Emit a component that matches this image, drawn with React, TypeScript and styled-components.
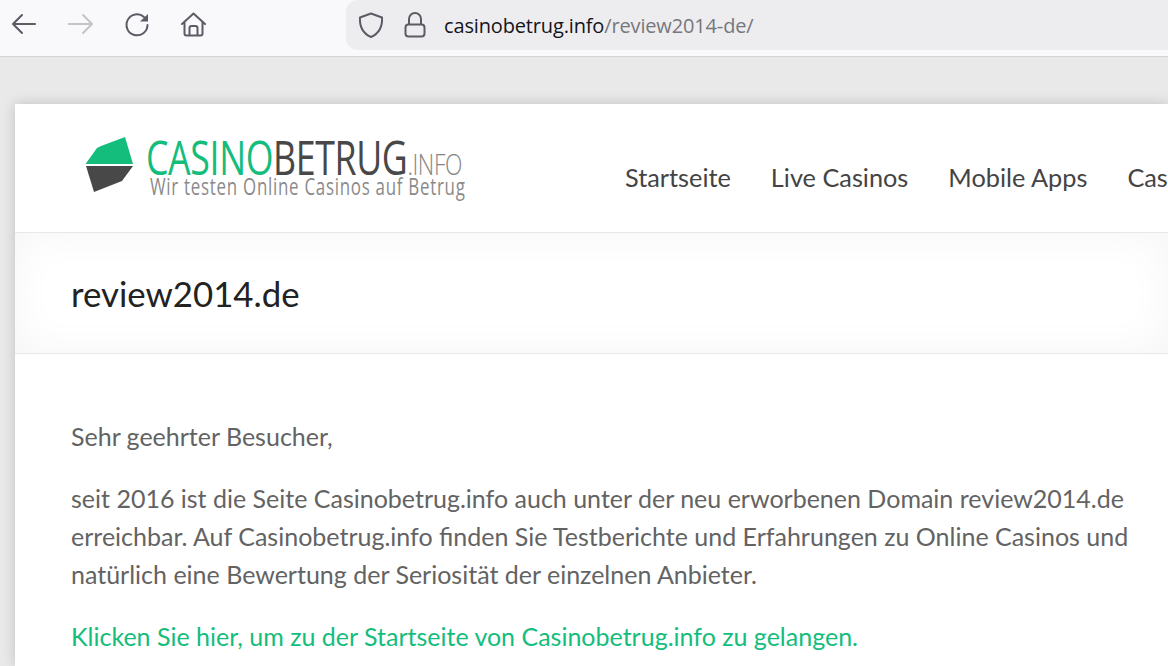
import React from "react";
import styled, { createGlobalStyle } from "styled-components";

const Global = createGlobalStyle`
  html, body { margin: 0; padding: 0; width: 1168px; height: 666px; overflow: hidden; background: #e9e9e9; }
  * { box-sizing: border-box; }
`;
const Page = styled.div`
  width: 1168px; height: 666px; overflow: hidden; display: flex; flex-direction: column;
  font-family: Lato, "Liberation Sans", sans-serif;
`;
const Toolbar = styled.div`
  height: 57px; flex: none; background: #f9f9fb; border-bottom: 1px solid #d4d4d6;
  display: flex; align-items: flex-start; padding-left: 10px;
`;
const NavButtons = styled.div`
  display: flex; align-items: center; gap: 28px; height: 50px; width: 336px; flex: none;
`;
const UrlBar = styled.div`
  flex: 1; height: 50px; background: #ededf0; border-radius: 12px 0 0 12px;
  display: flex; align-items: center; padding-left: 12px; gap: 20px;
`;
const UrlText = styled.div`
  margin-left: -4px; font-family: "Open Sans", sans-serif; font-size: 20px; color: #15141a; letter-spacing: -0.15px;
`;
const UrlRest = styled.span` color: #77777c; `;
const Stage = styled.div`
  flex: 1; padding: 47px 0 0 15px; min-height: 0;
`;
const Card = styled.div`
  background: #fff; height: 100%; box-shadow: 0 0 12px rgba(0,0,0,0.18); overflow: hidden;
`;
const Header = styled.div`
  height: 129px; display: flex; border-bottom: 1px solid #e8e8e8; white-space: nowrap;
`;
const Logo = styled.div`
  width: 610px; flex: none; display: flex; padding: 32px 0 0 69px; gap: 10px;
`;
const LogoText = styled.div`
  display: flex; flex-direction: column;
`;
const LogoTitle = styled.div`
  font-family: "Open Sans", sans-serif; font-size: 47px; line-height: 42px; height: 42px; white-space: nowrap;
  transform: scaleX(0.76); transform-origin: 0 0; letter-spacing: -0.5px; color: #484848;
`;
const Green = styled.span` color: #14bd7c; `;
const Info = styled.span` font-size: 30px; color: #858585; font-weight: 300; `;
const LogoTag = styled.div`
  font-family: "Open Sans", sans-serif; font-size: 23.500px; line-height: 24px; margin-top: -4px; margin-left: 4px;
  color: #8a8a8a; white-space: nowrap; transform: scaleX(0.72); transform-origin: 0 0; letter-spacing: 1px;
`;
const Nav = styled.nav`
  display: flex; gap: 40px; padding-top: 58px; font-size: 25.300px; line-height: 30px; color: #444;
`;
const TitleBand = styled.div`
  height: 121px; flex: none; background: #fff; box-shadow: inset 0 0 44px rgba(0,0,0,0.045);
  border-bottom: 1px solid #e8e8e8; padding: 40px 0 0 56px;
`;
const Title = styled.h1`
  margin: 0; font-size: 34.800px; line-height: 42px; font-weight: 400; color: #222;
`;
const Body = styled.div`
  padding: 63px 0 0 56px; font-size: 25px; line-height: 38px; color: #636363; width: 1100px;
`;
const P = styled.p` margin: 0 0 24px; white-space: nowrap; `;
const Link = styled.p` margin: 0; color: #14bd7c; white-space: nowrap; `;

const Icon = styled.svg<{ $c?: string }>`
  fill: none; stroke: ${p => p.$c || "#5b5b66"}; stroke-width: 2; stroke-linecap: round; stroke-linejoin: round; flex: none; display: block;
`;

export default function App() {
  return (
    <Page>
      <Global />
      <Toolbar>
        <NavButtons>
          <Icon width="28" height="28" viewBox="0 0 28 28"><path d="M3 13h22M12 4l-9 9 9 9" /></Icon>
          <Icon width="28" height="28" viewBox="0 0 28 28" $c="#c4c4c8"><path d="M3 13h22M17 4l9 9-9 9" /></Icon>
          <Icon width="28" height="28" viewBox="0 0 28 28"><path d="M25.500 14a10.500 10.500 0 1 1-3.500-8" /><path d="M26 3v7.500h-8z" fill="#5b5b66" stroke="none" /></Icon>
          <Icon width="28" height="28" viewBox="0 0 28 28"><path d="M4 13 15.500 2.500 27 13M6.500 11v11.500a2 2 0 0 0 2 2h14a2 2 0 0 0 2-2V11M11.500 24.500V17a2 2 0 0 1 2-2h4a2 2 0 0 1 2 2v7.500" /></Icon>
        </NavButtons>
        <UrlBar>
          <Icon width="26" height="28" viewBox="0 0 26 28"><path d="M13 2.500 24 6.500c.5 8-2 15.500-11 19.500C4 22 1.500 14.500 2 6.500z" /></Icon>
          <Icon width="24" height="28" viewBox="0 0 24 28"><path d="M5 13V8a6 6 0 0 1 12 0v5" /><rect x="1.500" y="13.500" width="19" height="12" rx="3" /></Icon>
          <UrlText>casinobetrug.info<UrlRest>/review2014-de/</UrlRest></UrlText>
        </UrlBar>
      </Toolbar>
      <Stage>
        <Card>
          <Header>
            <Logo>
              <svg width="52" height="60" viewBox="0 0 52 60" style={{ flex: "none" }}>
                <path d="M1.500 28 13 12 17 10 41 1 49 28z" fill="#14bd7c" />
                <path d="M2 30H49L38 45 10 56z" fill="#484848" />
              </svg>
              <LogoText>
                <LogoTitle><Green>CASINO</Green>BETRUG<Info>.INFO</Info></LogoTitle>
                <LogoTag>Wir testen Online Casinos auf Betrug</LogoTag>
              </LogoText>
            </Logo>
            <Nav>
              <span>Startseite</span>
              <span>Live Casinos</span>
              <span>Mobile Apps</span>
              <span>Casino</span>
            </Nav>
          </Header>
          <TitleBand><Title>review2014.de</Title></TitleBand>
          <Body>
            <P>Sehr geehrter Besucher,</P>
            <P>seit 2016 ist die Seite Casinobetrug.info auch unter der neu erworbenen Domain review2014.de<br />erreichbar. Auf Casinobetrug.info finden Sie Testberichte und Erfahrungen zu Online Casinos und<br />natürlich eine Bewertung der Seriosität der einzelnen Anbieter.</P>
            <Link>Klicken Sie hier, um zu der Startseite von Casinobetrug.info zu gelangen.</Link>
          </Body>
        </Card>
      </Stage>
    </Page>
  );
}
